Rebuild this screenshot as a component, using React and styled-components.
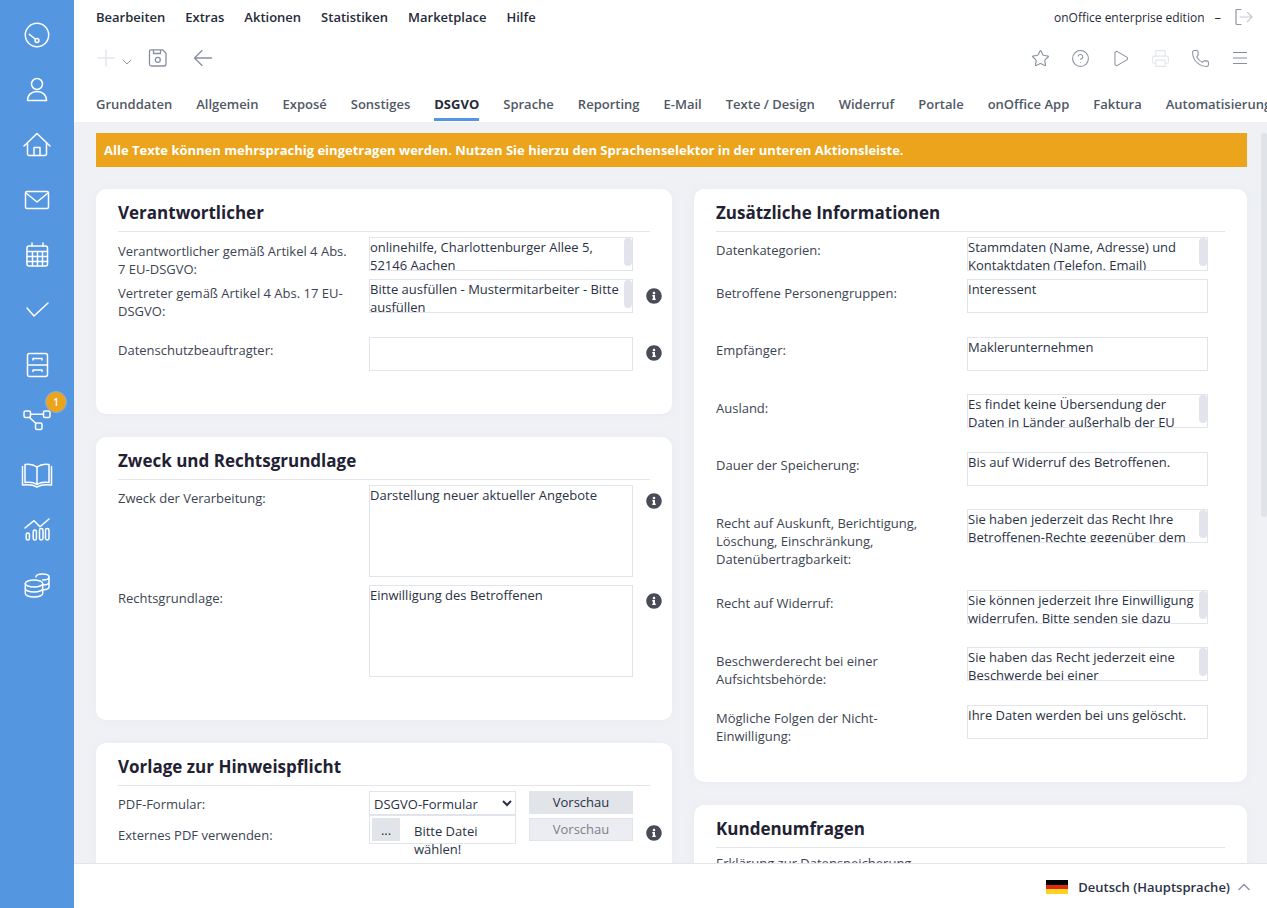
import React from 'react';
import styled, { createGlobalStyle } from 'styled-components';
import { FaInfoCircle } from 'react-icons/fa';
import { Star, CircleHelp, Play, Printer, Phone, ChevronDown, ChevronUp } from 'lucide-react';

const GlobalStyle = createGlobalStyle`
    html, body {
        margin: 0;
        padding: 0;
        height: 100%;
        overflow: hidden;
    }
    body {
        font-family: "Open Sans", "Liberation Sans", sans-serif;
        font-size: 13px;
        color: #3d4452;
    }
    * {
        box-sizing: border-box;
    }
`;

const Page = styled.div`
    display: flex;
    width: 1267px;
    height: 908px;
    overflow: hidden;
`;

const Sidebar = styled.nav`
    flex: 0 0 74px;
    padding-top: 7.5px;
    background-color: #5596e0;
`;

const SideItem = styled.div`
    position: relative;
    display: flex;
    align-items: center;
    justify-content: center;
    height: 55px;
`;

const Badge = styled.span`
    position: absolute;
    top: -1.5px;
    left: 45px;
    display: flex;
    align-items: center;
    justify-content: center;
    width: 22px;
    height: 22px;
    border: 1px solid #7db0e8;
    border-radius: 50%;
    background-color: #eba41c;
    color: #fff;
    font-size: 10px;
    font-weight: 600;
`;

const Main = styled.div`
    flex: 1;
    display: flex;
    flex-direction: column;
    min-width: 0;
`;

const Header = styled.header`
    flex: 0 0 122px;
    padding-left: 22px;
    background-color: #fff;
    overflow: hidden;
`;

const MenuBar = styled.div`
    display: flex;
    align-items: center;
    height: 34px;
    padding-right: 14px;
`;

const MenuLink = styled.a`
    margin-right: 20px;
    color: #262b3a;
    font-weight: 600;
`;

const Edition = styled.span`
    margin-left: auto;
    color: #262b3a;
    font-size: 12px;
`;

const Dash = styled.span`
    margin: 0 14px 0 10px;
    color: #262b3a;
`;

const ToolBar = styled.div`
    display: flex;
    align-items: center;
    height: 48px;
    padding: 0 17px 0 1px;
`;

const ToolGroup = styled.div`
    display: flex;
    align-items: center;
    gap: ${props => props.$gap || 0}px;
    margin-left: ${props => (props.$right ? 'auto' : `${props.$left || 0}px`)};
`;

const ToolIcon = styled.span`
    display: flex;
    align-items: center;
    justify-content: center;
    width: ${props => props.$size || 20}px;
    padding-top: ${props => props.$drop || 0}px;
    color: ${props => (props.$muted ? '#e3e6ec' : '#868fa0')};
`;

const TabBar = styled.div`
    display: flex;
    gap: 24px;
    padding-top: 13px;
    white-space: nowrap;
`;

const Tab = styled.a`
    display: block;
    padding-bottom: 5px;
    border-bottom: 3px solid ${props => (props.$active ? '#5596e0' : 'transparent')};
    color: ${props => (props.$active ? '#262b3a' : '#505866')};
    font-weight: ${props => (props.$active ? 700 : 600)};
    line-height: 18px;
`;

const ContentWrap = styled.div`
    position: relative;
    flex: 1;
    min-height: 0;
`;

const Content = styled.main`
    height: 100%;
    padding: 11px 20px 0 22px;
    background-color: #eff1f5;
    overflow: hidden;
`;

const PageThumb = styled.span`
    position: absolute;
    top: 11px;
    right: 0;
    width: 6px;
    height: 384px;
    border-radius: 3px;
    background-color: #e0e3e8;
`;

const Notice = styled.div`
    height: 34px;
    margin-bottom: 22px;
    padding: 0 8px;
    background-color: #eba41c;
    color: #fff;
    font-weight: 700;
    line-height: 34px;
`;

const Columns = styled.div`
    display: grid;
    grid-template-columns: 576px 553px;
    gap: 22px;
    align-items: start;
`;

const Column = styled.div`
    display: flex;
    flex-direction: column;
    gap: 23px;
`;

const Card = styled.section`
    min-height: ${props => props.$minHeight || 0}px;
    padding: 0 22px 43px;
    border-radius: 10px;
    background-color: #fff;
    box-shadow: 0 0 12px rgba(120, 130, 150, 0.05);
`;

const CardTitle = styled.h2`
    height: 43px;
    margin: 0 0 ${props => props.$gap || 5}px;
    padding-top: 11px;
    border-bottom: 1px solid #e3e5e9;
    color: #1f2233;
    font-size: 17px;
    font-weight: 700;
    line-height: 26px;
`;

const Row = styled.div`
    display: grid;
    grid-template-columns: ${props => props.$label}px ${props => props.$field}px 16px;
    height: ${props => props.$height}px;
`;

const Label = styled.label`
    padding: 4.75px 18px 0 0;
    line-height: 18px;
`;

const Field = styled.div`
    position: relative;
    height: ${props => props.$height}px;
    padding-right: ${props => (props.$scroll ? 10 : 0)}px;
    border: 1px solid #e1e4ea;
    color: #2b3245;
    line-height: 18px;
    overflow: hidden;
`;

const Thumb = styled.span`
    position: absolute;
    top: 0;
    right: 0;
    width: 8px;
    height: 28px;
    border-radius: 4px;
    background-color: #e1e4ea;
`;

const InfoSlot = styled.span`
    display: block;
    margin-left: ${props => (props.$flush ? 0 : 13)}px;
    padding-top: ${props => props.$top || 8.5}px;
    color: #484c57;
    line-height: 0;
`;

const PdfRow = styled.div`
    display: grid;
    grid-template-columns: 251px 147px 13px 104px 13px 16px;
    height: ${props => props.$height}px;
`;

const PdfLabel = styled(Label)`
    padding-top: ${props => props.$top}px;
`;

const PdfSelect = styled.select`
    width: 147px;
    height: 24px;
    padding: 2px 0 0;
    border: 1px solid #e1e4ea;
    border-radius: 0;
    background-color: #fff;
    color: #2b3245;
    font-family: inherit;
    font-size: 13px;
`;

const PreviewButton = styled.button`
    height: 23px;
    margin-top: ${props => (props.disabled ? 3 : 0)}px;
    padding: 0;
    border: ${props => (props.disabled ? '1px solid #e1e4ea' : 'none')};
    background-color: ${props => (props.disabled ? '#ecedf2' : '#e1e4e9')};
    color: ${props => (props.disabled ? '#7b7f88' : '#2b3245')};
    font-family: inherit;
    font-size: 13px;
`;

const FileBox = styled.div`
    display: flex;
    align-items: flex-start;
    height: 29px;
    padding: 2px;
    border: 1px solid #e1e4ea;
    color: #2b3245;
`;

const FileButton = styled.span`
    flex: 0 0 28px;
    height: 23px;
    background-color: #e1e4e9;
    line-height: 25px;
    text-align: center;
`;

const FileName = styled.span`
    width: 80px;
    margin: 4px 0 0 14px;
    line-height: 18px;
`;

const SideSpacer = styled.span``;

const Footer = styled.footer`
    flex: 0 0 45px;
    display: flex;
    align-items: center;
    justify-content: flex-end;
    padding: 1px 13px 0 0;
    border-top: 1px solid #e3e5e9;
    background-color: #fff;
`;

const Flag = styled.span`
    width: 22px;
    height: 14px;
    margin-right: 10px;
    background: linear-gradient(#000 0 33.3%, #dd2b0e 33.3% 66.6%, #fdd225 66.6%);
`;

const LanguageName = styled.span`
    margin-right: 4px;
    color: #2b3245;
    font-weight: 600;
`;

const LangChevron = styled.span`
    display: flex;
    color: #8d95a5;
`;

const SideSvg = ({ children }) => (
    <svg width="32" height="32" viewBox="0 0 32 32" fill="none" stroke="#fff" strokeWidth="1.5" strokeLinecap="round" strokeLinejoin="round">
        {children}
    </svg>
);

const sideIcons = [
    <>
        <circle cx="16" cy="16" r="11.7" />
        <path d="M8.3 15.3 L14.3 20" />
        <circle cx="16" cy="21.500" r="1.900" />
    </>,
    <>
        <circle cx="16" cy="10" r="5.5" />
        <path d="M6.5 26.5c0-5.6 4-9 9.5-9s9.5 3.4 9.5 9z" />
    </>,
    <>
        <path d="M3 17 16 4.5 29 17" />
        <path d="M6.5 14.5V25a1.5 1.5 0 0 0 1.5 1.5h16a1.5 1.5 0 0 0 1.5-1.5V14.5" />
        <path d="M13 26.5V18.500h6v8" />
    </>,
    <>
        <rect x="4.500" y="7.500" width="23" height="17" rx="1.500" />
        <path d="M5 9l11 9 11-9" />
    </>,
    <>
        <rect x="6" y="7" width="20.500" height="20" rx="2" />
        <path d="M11 4v3M22 4v3M6 12.500h20.500M6 17.500h20.500M6 22.500h20.500M11.500 12.500V27M16.500 12.500V27M21.500 12.500V27" />
    </>,
    <path d="M6 14l7 8 14-13" />,
    <>
        <rect x="6.500" y="4.500" width="20" height="23" rx="2" />
        <path d="M6.500 16h20M12 11V9.500h9V11M12 22.500V21h9v1.500" />
    </>,
    <>
        <rect x="3" y="7" width="6.500" height="6.500" rx="1.500" />
        <rect x="22.500" y="7" width="6.500" height="6.500" rx="1.500" />
        <rect x="14.500" y="19" width="6.500" height="6.500" rx="1.500" />
        <path d="M9.500 10.200h13M8.500 13.500l6.500 6" />
    </>,
    <>
        <path d="M16 8C12 5 7.500 4.800 4 5.500V23.500C8 23 12.500 23 16 25.500 19.500 23 24 23 28 23.500V5.500C24.500 4.800 20 5 16 8ZM16 8V25.500" />
        <path d="M1.500 7.500V26C8 25.200 12.500 25.800 16 28 19.500 25.800 24 25.200 30.500 26V7.500" />
    </>,
    <>
        <path d="M4 14l9-7.300 6 6L28 5" />
        <rect x="5.200" y="19" width="3.200" height="7" rx="1.600" />
        <rect x="12.200" y="16" width="3.200" height="10" rx="1.600" />
        <rect x="18.500" y="14.500" width="3.500" height="11.500" rx="1.700" />
        <rect x="24.500" y="14.500" width="3.500" height="11.500" rx="1.700" />
    </>,
    <>
        <ellipse cx="13" cy="14.500" rx="8.700" ry="3.500" />
        <path d="M4.300 14.500v10c0 2 3.900 3.500 8.700 3.500s8.700-1.500 8.700-3.500v-10M4.300 19.500c0 2 3.900 3.500 8.700 3.500s8.700-1.500 8.700-3.500" />
        <path d="M15 8c0-1.800 3-3 6.500-3s6.500 1.200 6.500 3v10c0 1.300-2.500 2.600-6.300 2.900M21.700 11c3.500 0 6.300-1.200 6.300-3M21.700 16c3.500 0 6.300-1.200 6.300-3" />
    </>
];

const menuItems = ['Bearbeiten', 'Extras', 'Aktionen', 'Statistiken', 'Marketplace', 'Hilfe'];

const tabs = [
    'Grunddaten', 'Allgemein', 'Exposé', 'Sonstiges', 'DSGVO', 'Sprache', 'Reporting',
    'E-Mail', 'Texte / Design', 'Widerruf', 'Portale', 'onOffice App', 'Faktura', 'Automatisierung'
];

const infoRows = [
    { label: 'Datenkategorien:', text: 'Stammdaten (Name, Adresse) und Kontaktdaten (Telefon, Email)', scroll: true, rowHeight: 42.5 },
    { label: 'Betroffene Personengruppen:', text: 'Interessent' },
    { label: 'Empfänger:', text: 'Maklerunternehmen' },
    { label: 'Ausland:', text: 'Es findet keine Übersendung der Daten in Länder außerhalb der EU statt.', scroll: true },
    { label: 'Dauer der Speicherung:', text: 'Bis auf Widerruf des Betroffenen.' },
    { label: 'Recht auf Auskunft, Berichtigung, Löschung, Einschränkung, Datenübertragbarkeit:', text: 'Sie haben jederzeit das Recht Ihre Betroffenen-Rechte gegenüber dem Verantwortlichen geltend zu machen.', scroll: true, rowHeight: 80.5 },
    { label: 'Recht auf Widerruf:', text: 'Sie können jederzeit Ihre Einwilligung widerrufen. Bitte senden sie dazu eine E-Mail an uns.', scroll: true },
    { label: 'Beschwerderecht bei einer Aufsichtsbehörde:', text: 'Sie haben das Recht jederzeit eine Beschwerde bei einer Aufsichtsbehörde einzureichen.', scroll: true },
    { label: 'Mögliche Folgen der Nicht-Einwilligung:', text: 'Ihre Daten werden bei uns gelöscht.', rowHeight: 34 }
];

const FormRow = ({ label, text, scroll, rowHeight = 57.5, fieldHeight = 34, info, fieldWidth = 264 }) => (
    <Row $label={251} $field={fieldWidth} $height={rowHeight}>
        <Label>{label}</Label>
        <Field $scroll={scroll} $height={fieldHeight}>
            {text}
            {scroll && <Thumb />}
        </Field>
        {info ? <InfoSlot><FaInfoCircle size={16} /></InfoSlot> : <SideSpacer />}
    </Row>
);

const App = () => (
    <>
        <GlobalStyle />
        <Page>
            <Sidebar>
                {sideIcons.map((icon, idx) => (
                    <SideItem key={idx}>
                        <SideSvg>{icon}</SideSvg>
                        {idx === 7 && <Badge>1</Badge>}
                    </SideItem>
                ))}
            </Sidebar>
            <Main>
                <Header>
                    <MenuBar>
                        {menuItems.map(item => <MenuLink key={item}>{item}</MenuLink>)}
                        <Edition>onOffice enterprise edition</Edition>
                        <Dash>–</Dash>
                        <svg width="18" height="18" viewBox="0 0 18 18" fill="none" strokeWidth="1.2" strokeLinecap="round" strokeLinejoin="round">
                            <path d="M6 1.500H2a1 1 0 0 0-1 1v13a1 1 0 0 0 1 1h4" stroke="#8d95a5" />
                            <path d="M5 9h12M12.500 4.500 17 9l-4.500 4.500" stroke="#c5cad3" />
                        </svg>
                    </MenuBar>
                    <ToolBar>
                        <ToolGroup>
                            <svg width="20" height="20" viewBox="0 0 20 20" fill="none" stroke="#e3e6ec" strokeWidth="1.6">
                                <path d="M0.500 10h17M9 1.500v17" />
                            </svg>
                            <ToolIcon $size={20} $drop={7}><ChevronDown size={16} strokeWidth={1.4} /></ToolIcon>
                        </ToolGroup>
                        <ToolGroup $left={11}>
                            <svg width="20" height="20" viewBox="0 0 20 20" fill="none" stroke="#868fa0" strokeWidth="1.300" strokeLinejoin="round">
                                <path d="M3 1.800h11.500L18 5.300V16a2 2 0 0 1-2 2H3.500a2 2 0 0 1-2-2V3.300a1.500 1.500 0 0 1 1.500-1.500z" />
                                <path d="M5.500 2v3.500h7V2" />
                                <circle cx="9.800" cy="11.800" r="2.500" />
                            </svg>
                        </ToolGroup>
                        <ToolGroup $left={25}>
                            <svg width="20" height="20" viewBox="0 0 20 20" fill="none" stroke="#868fa0" strokeWidth="1.300" strokeLinecap="round" strokeLinejoin="round">
                                <path d="M1.500 10h17M9 2.500 1.500 10 9 17.500" />
                            </svg>
                        </ToolGroup>
                        <ToolGroup $right $gap={20}>
                            <ToolIcon><Star size={19} strokeWidth={1.4} /></ToolIcon>
                            <ToolIcon><CircleHelp size={19} strokeWidth={1.3} /></ToolIcon>
                            <ToolIcon><Play size={19} strokeWidth={1.3} /></ToolIcon>
                            <ToolIcon $muted><Printer size={19} strokeWidth={1.4} /></ToolIcon>
                            <ToolIcon><Phone size={19} strokeWidth={1.3} /></ToolIcon>
                            <ToolIcon>
                                <svg width="16" height="14" viewBox="0 0 16 14" fill="none" stroke="#868fa0" strokeWidth="1.100">
                                    <path d="M1 1.500h14M1 7h14M1 12.500h14" />
                                </svg>
                            </ToolIcon>
                        </ToolGroup>
                    </ToolBar>
                    <TabBar>
                        {tabs.map(tab => <Tab key={tab} $active={tab === 'DSGVO'}>{tab}</Tab>)}
                    </TabBar>
                </Header>
                <ContentWrap>
                    <Content>
                        <Notice>Alle Texte können mehrsprachig eingetragen werden. Nutzen Sie hierzu den Sprachenselektor in der unteren Aktionsleiste.</Notice>
                        <Columns>
                            <Column>
                                <Card>
                                    <CardTitle>Verantwortlicher</CardTitle>
                                    <FormRow label="Verantwortlicher gemäß Artikel 4 Abs. 7 EU-DSGVO:" text="onlinehilfe, Charlottenburger Allee 5, 52146 Aachen" scroll rowHeight={42} />
                                    <FormRow label="Vertreter gemäß Artikel 4 Abs. 17 EU-DSGVO:" text="Bitte ausfüllen - Mustermitarbeiter - Bitte ausfüllen" scroll info />
                                    <FormRow label="Datenschutzbeauftragter:" info rowHeight={34} />
                                </Card>
                                <Card>
                                    <CardTitle>Zweck und Rechtsgrundlage</CardTitle>
                                    <FormRow label="Zweck der Verarbeitung:" text="Darstellung neuer aktueller Angebote" fieldHeight={92} rowHeight={100} info />
                                    <FormRow label="Rechtsgrundlage:" text="Einwilligung des Betroffenen" fieldHeight={92} rowHeight={92} info />
                                </Card>
                                <Card $minHeight={400}>
                                    <CardTitle>Vorlage zur Hinweispflicht</CardTitle>
                                    <PdfRow $height={24}>
                                        <PdfLabel $top={4}>PDF-Formular:</PdfLabel>
                                        <PdfSelect defaultValue="DSGVO-Formular">
                                            <option>DSGVO-Formular</option>
                                        </PdfSelect>
                                        <SideSpacer />
                                        <PreviewButton>Vorschau</PreviewButton>
                                    </PdfRow>
                                    <PdfRow $height={29}>
                                        <PdfLabel $top={11}>Externes PDF verwenden:</PdfLabel>
                                        <FileBox>
                                            <FileButton>...</FileButton>
                                            <FileName>Bitte Datei wählen!</FileName>
                                        </FileBox>
                                        <SideSpacer />
                                        <PreviewButton disabled>Vorschau</PreviewButton>
                                        <SideSpacer />
                                        <InfoSlot $top={10} $flush><FaInfoCircle size={16} /></InfoSlot>
                                    </PdfRow>
                                </Card>
                            </Column>
                            <Column>
                                <Card>
                                    <CardTitle $gap={4.5}>Zusätzliche Informationen</CardTitle>
                                    {infoRows.map(row => (
                                        <FormRow key={row.label} {...row} fieldWidth={241} />
                                    ))}
                                </Card>
                                <Card $minHeight={300}>
                                    <CardTitle>Kundenumfragen</CardTitle>
                                    <Row $label={251} $field={241}>
                                        <PdfLabel $top={1}>Erklärung zur Datenspeicherung</PdfLabel>
                                    </Row>
                                </Card>
                            </Column>
                        </Columns>
                    </Content>
                    <PageThumb />
                </ContentWrap>
                <Footer>
                    <Flag />
                    <LanguageName>Deutsch (Hauptsprache)</LanguageName>
                    <LangChevron><ChevronUp size={20} strokeWidth={1.8} /></LangChevron>
                </Footer>
            </Main>
        </Page>
    </>
);

export default App;
